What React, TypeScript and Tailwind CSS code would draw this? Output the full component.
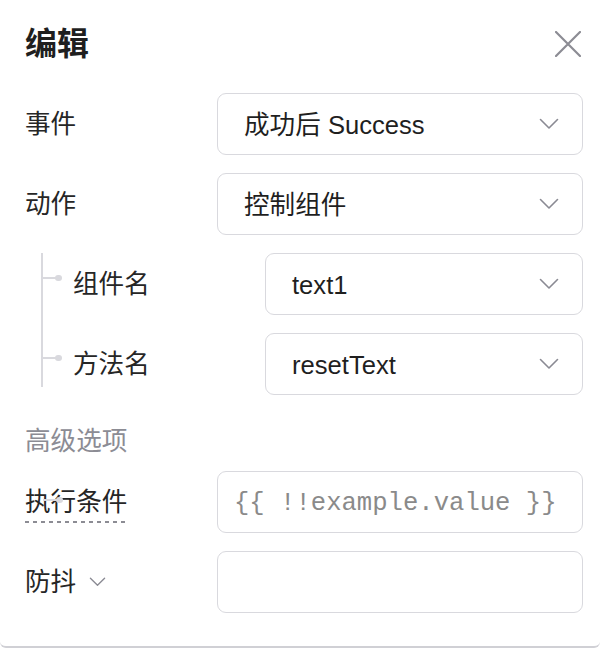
import React from 'react';

const FONT = { fontFamily: '"Liberation Sans", "Noto Sans CJK SC", sans-serif' };

const Chevron = ({ w = 20, h = 12 }: { w?: number; h?: number }) => (
  <svg width={w} height={h} viewBox="0 0 20 12" fill="none" className="shrink-0">
    <path d="M1.5 1.5 L10 10 L18.5 1.5" stroke="#8a8a93" strokeWidth="1.6" strokeLinecap="round" strokeLinejoin="round" />
  </svg>
);

const Branch = ({ className }: { className: string }) => (
  <div className={`absolute flex items-center ${className}`}>
    <div className="w-[14px] h-[2px] bg-[#d9d9de]" />
    <div className="w-[6.5px] h-[6.5px] rounded-full bg-[#d9d9de] -ml-[1px]" />
  </div>
);

const SelectBox = ({ value }: { value: string }) => (
  <div className="flex-1 h-full border-[1.6px] border-[#d9d9de] rounded-[9px] flex items-center justify-between pl-[26px] pr-[23px]">
    <span className="text-[25.6px] text-[#1f1f1f] mt-[2px]">{value}</span>
    <Chevron />
  </div>
);

export default function App() {
  return (
    <div className="w-[600px] h-[648px] bg-white" style={FONT}>
      <div className="h-[648px] border-b-[2.5px] border-[#d0d0d5] rounded-b-[6px] flex flex-col">
        {/* Header */}
        <div className="h-[88px] shrink-0 pl-[25px] pr-[19px] flex items-center justify-between">
          <h1 className="text-[32px] font-bold text-[#1f1f1f] leading-none">编辑</h1>
          <svg width="26" height="26" viewBox="0 0 26 26" fill="none">
            <path d="M1 1 L25 25 M25 1 L1 25" stroke="#8c8c94" strokeWidth="2.2" strokeLinecap="round" />
          </svg>
        </div>

        <div className="flex flex-col pl-[25px] pr-[17px]">
          {/* 事件 */}
          <div className="flex items-center h-[62px] mt-[5px]">
            <span className="w-[192px] shrink-0 text-[25.6px] text-[#262626] mt-[1px]">事件</span>
            <SelectBox value="成功后 Success" />
          </div>

          {/* 动作 */}
          <div className="flex items-center h-[62px] mt-[18px]">
            <span className="w-[192px] shrink-0 text-[25.6px] text-[#262626] mt-[1px]">动作</span>
            <SelectBox value="控制组件" />
          </div>

          {/* Tree group */}
          <div className="relative flex flex-col gap-[18px] pl-[48px] mt-[18px]">
            <div className="absolute left-[16px] top-0 bottom-[8px] w-[2px] bg-[#d9d9de]" />
            <div className="relative flex items-center h-[62px]">
              <Branch className="left-[-31px] top-[21.5px]" />
              <span className="w-[192px] shrink-0 text-[25.6px] text-[#262626] mt-[1px]">组件名</span>
              <SelectBox value="text1" />
            </div>
            <div className="relative flex items-center h-[62px]">
              <Branch className="left-[-31px] top-[21.5px]" />
              <span className="w-[192px] shrink-0 text-[25.6px] text-[#262626] mt-[1px]">方法名</span>
              <SelectBox value="resetText" />
            </div>
          </div>

          {/* 高级选项 */}
          <div className="h-[76px] pt-[16px] flex items-center">
            <span className="text-[25.6px] text-[#8c8c94]">高级选项</span>
          </div>

          {/* 执行条件 */}
          <div className="relative flex items-center h-[62px]">
            <div className="w-[192px] shrink-0">
              <span className="relative inline-block text-[25.6px] leading-[30px] text-[#262626]">
                执行条件
                <span className="absolute left-0 right-0 top-[34px] h-[2px] bg-[repeating-linear-gradient(to_right,#8c8c94_0_4px,transparent_4px_8px)]" />
              </span>
            </div>
            <Branch className="left-[18px] top-[25.5px] z-10" />
            <div className="flex-1 h-full border-[1.6px] border-[#d9d9de] rounded-[9px] flex items-center pl-[16px] pr-[16px] overflow-hidden">
              <span
                className="text-[25.6px] text-[#8a8a8a] whitespace-nowrap mt-[5px]"
                style={{ fontFamily: '"Liberation Mono", monospace' }}
              >
                {'{{ !!example.value }}'}
              </span>
            </div>
          </div>

          {/* 防抖 */}
          <div className="flex items-center h-[62px] mt-[18px]">
            <div className="w-[192px] shrink-0 flex items-center gap-[13px]">
              <span className="text-[25.6px] text-[#262626] mt-[1px]">防抖</span>
              <Chevron w={17} h={10} />
            </div>
            <div className="flex-1 h-full border-[1.6px] border-[#d9d9de] rounded-[9px]" />
          </div>
        </div>
      </div>
    </div>
  );
}
